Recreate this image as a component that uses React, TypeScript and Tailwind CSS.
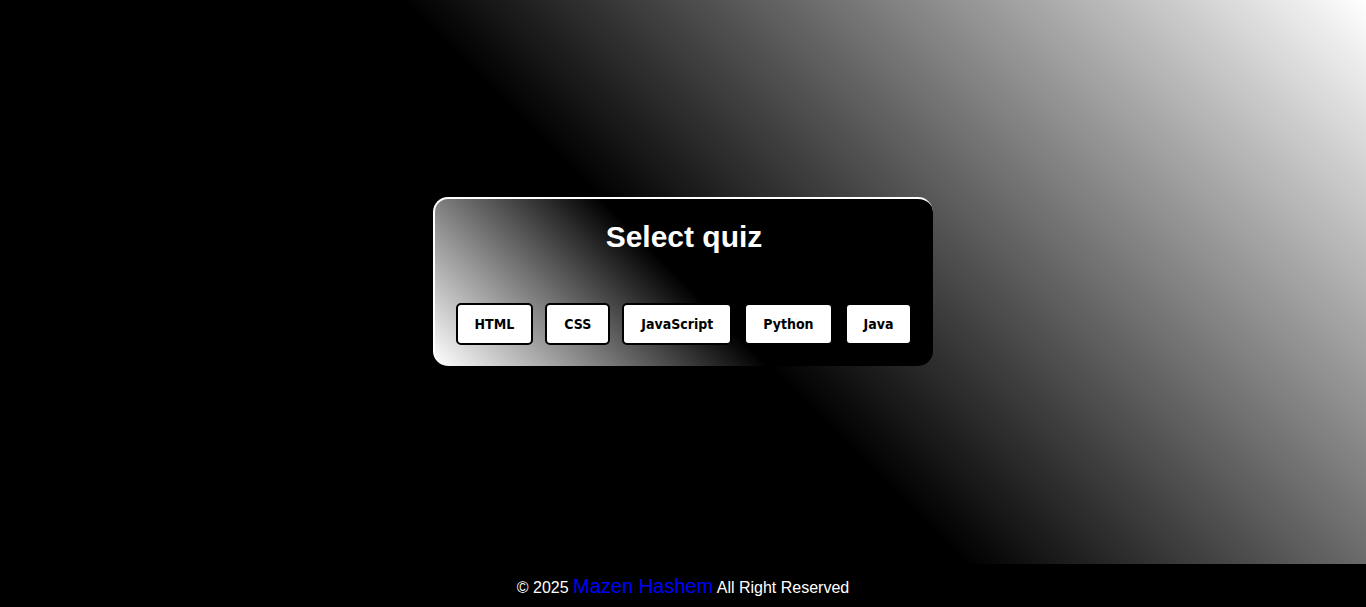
const quizzes = ['HTML', 'CSS', 'JavaScript', 'Python', 'Java']

export default function App() {
    return (
        <div className="flex flex-col bg-black font-['Liberation_Sans',Arial,sans-serif]">
            <main className="flex h-[564px] items-center justify-center bg-[linear-gradient(45deg,#000_50%,#fff)]">
                <div className="mb-[2px] flex w-[500px] flex-col items-center rounded-[15px] border-t-2 border-l-2 border-white bg-[linear-gradient(45deg,#fff,#000_50%)] pt-[18px] pb-[21px]">
                    <h1 className="h-[40px] text-[30px] leading-[40px] font-bold text-white">Select quiz</h1>
                    <div className="mt-[46px] flex gap-3">
                        {quizzes.map((q) => (
                            <button
                                key={q}
                                className="rounded-[5px] border-2 border-black bg-white px-[17px] py-[10px] font-['DejaVu_Sans_Condensed','DejaVu_Sans',Verdana,sans-serif] text-[14px] leading-[18px] font-bold text-black"
                            >
                                {q}
                            </button>
                        ))}
                    </div>
                </div>
            </main>
            <footer className="flex h-[43px] items-center justify-center text-base text-white">
                <p>
                    © 2025 <span className="text-[20px] text-[#0000ff]">Mazen Hashem</span> All Right Reserved
                </p>
            </footer>
        </div>
    )
}
